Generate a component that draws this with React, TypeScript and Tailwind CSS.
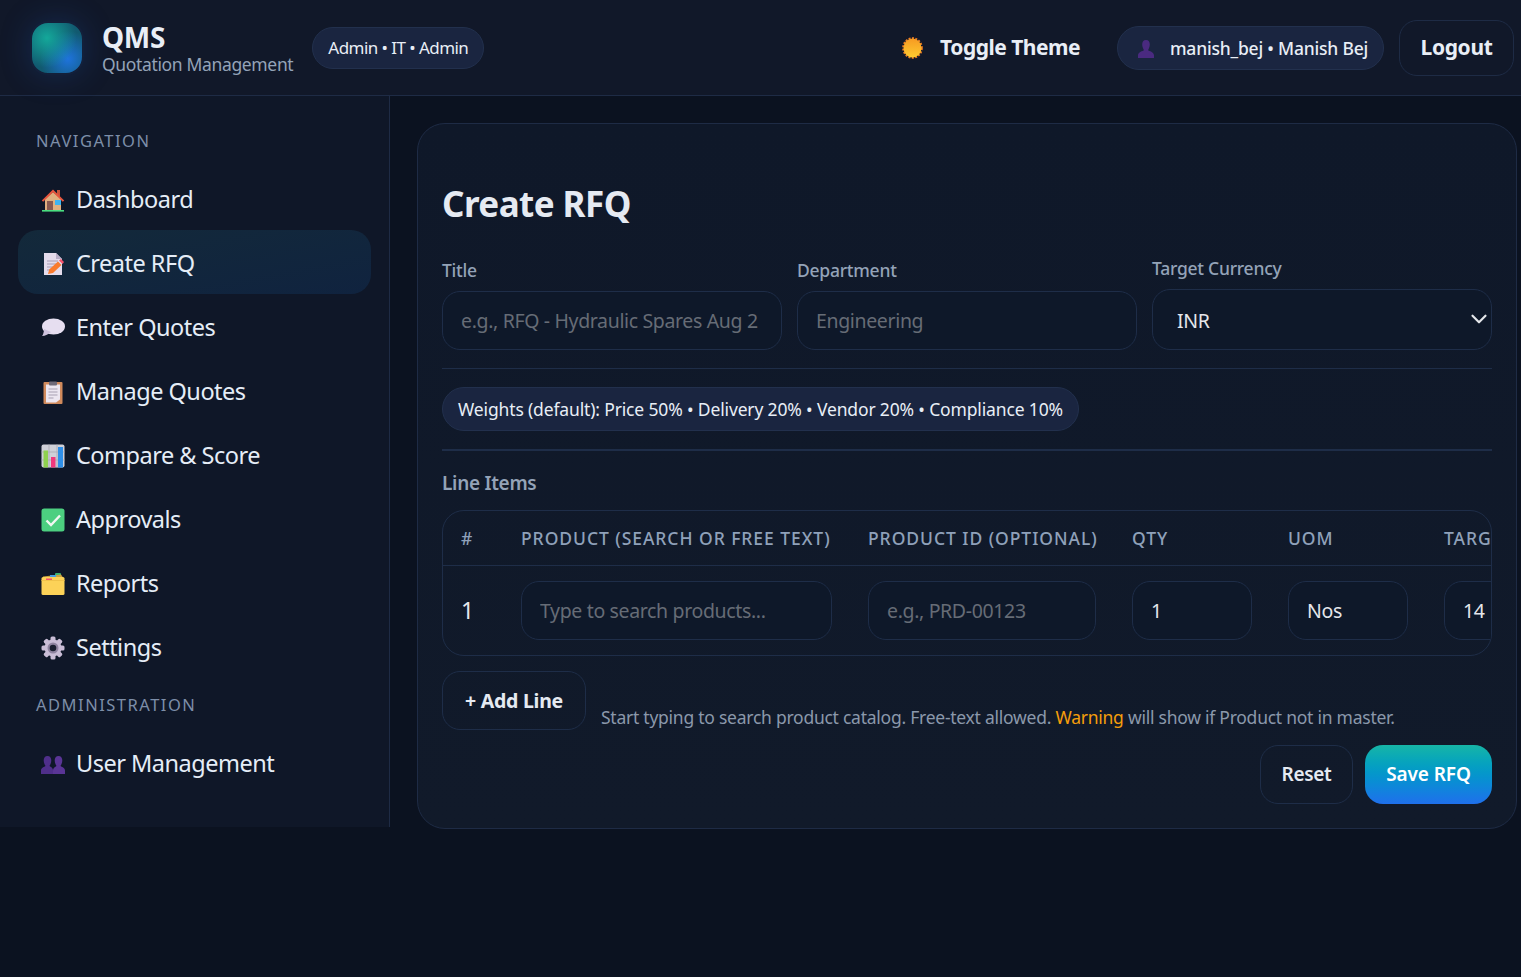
import React from 'react';
import { ChevronDown } from 'lucide-react';

const font = "font-['Noto_Sans','Open_Sans',sans-serif]";

const HouseIcon = () => (
  <svg width="24" height="24" viewBox="0 0 24 24">
    <rect x="16" y="2" width="3" height="6" fill="#c8553d" />
    <path d="M4 11 12 4l8 7v11H4z" fill="#e0b080" />
    <path d="M0.8 12.5 12 1.5l11.2 11-1.4 1.2L12 4.2 2.2 13.7z" fill="#e8553e" />
    <rect x="6" y="13" width="6" height="9" fill="#8a5a50" />
    <rect x="14" y="12" width="6" height="5" fill="#3fb4f2" />
    <rect x="1" y="22" width="22" height="1.6" fill="#4ade80" />
  </svg>
);

const MemoIcon = () => (
  <svg width="24" height="24" viewBox="0 0 24 24">
    <path d="M3 1h12l6 6v16H3z" fill="#e4dcec" />
    <path d="M15 1l6 6h-6z" fill="#b9aec8" />
    <path d="M6 9h11M6 12h11M6 15h7M6 18h5" stroke="#a59bb3" strokeWidth="1.1" />
    <path d="M7 22l1.2-4.5L17 9.5l3.5 3.4L12 21z" fill="#f97b2e" />
    <path d="M18 8.5l2-1.5 3 3-1.5 2z" fill="#f4516c" />
  </svg>
);

const BubbleIcon = () => (
  <svg width="24" height="24" viewBox="0 0 24 24">
    <ellipse cx="12.5" cy="10.5" rx="11.5" ry="8" fill="#e6def0" />
    <path d="M3 13c0 3-1 6-2 7 3 0 7-2 9-4z" fill="#cfc3de" />
  </svg>
);

const ClipboardIcon = () => (
  <svg width="24" height="24" viewBox="0 0 24 24">
    <rect x="2.5" y="2" width="19" height="22" rx="1" fill="#d08a5c" />
    <path d="M5 4.500h14v15l-4 3H5z" fill="#ece6f0" />
    <path d="M7.500 9h9M7.500 12h9M7.500 15h9M7.500 18h5" stroke="#a7a0b2" strokeWidth="1.1" />
    <rect x="8" y="1.500" width="8" height="4" rx="1" fill="#6f6a78" />
  </svg>
);

const ChartIcon = () => (
  <svg width="24" height="24" viewBox="0 0 24 24">
    <rect x="0.5" y="0.500" width="23" height="23" rx="2" fill="#cfd0d8" />
    <path d="M8 0.500v23M16 0.500v23M0.500 8h23M0.500 16h23" stroke="#a9aab4" strokeWidth="0.8" />
    <rect x="2.500" y="6.500" width="4.500" height="17" fill="#8fd14f" />
    <rect x="10" y="13" width="4.500" height="10.500" fill="#f0387c" />
    <rect x="17" y="3" width="5" height="20.500" fill="#2f8fe8" />
  </svg>
);

const CheckIcon = () => (
  <svg width="24" height="24" viewBox="0 0 24 24">
    <rect x="0.500" y="0.500" width="23" height="23" rx="2.500" fill="#4ccf80" />
    <path d="M5.500 12.500l4.500 4.500 9-9.500" fill="none" stroke="#f2f7f2" strokeWidth="2.400" />
  </svg>
);

const FolderIcon = () => (
  <svg width="24" height="24" viewBox="0 0 24 24">
    <rect x="14" y="1" width="6" height="4" rx="1" fill="#3bb273" />
    <path d="M2 4.500 20 2.500l2 3H2z" fill="#caa13f" />
    <rect x="9" y="3" width="6" height="2" fill="#4b9fe0" />
    <rect x="0.500" y="5" width="23" height="18" rx="1.500" fill="#fcd258" />
    <rect x="5" y="6.500" width="6" height="1.700" fill="#f4516c" />
    <rect x="0.500" y="8" width="23" height="1" fill="#f0c24a" />
  </svg>
);

const GearIcon = () => (
  <svg width="24" height="24" viewBox="0 0 24 24">
    <g fill="#c9bdd6">
      <circle cx="12" cy="12" r="8.500" />
      <rect x="9.500" y="0.500" width="5" height="23" rx="1.500" />
      <rect x="9.500" y="0.500" width="5" height="23" rx="1.500" transform="rotate(45 12 12)" />
      <rect x="9.500" y="0.500" width="5" height="23" rx="1.500" transform="rotate(90 12 12)" />
      <rect x="9.500" y="0.500" width="5" height="23" rx="1.500" transform="rotate(135 12 12)" />
    </g>
    <circle cx="12" cy="12" r="5.500" fill="#8f84a0" />
    <circle cx="12" cy="12" r="3.300" fill="#1a1f30" />
  </svg>
);

const BustsIcon = () => (
  <svg width="24" height="24" viewBox="0 0 24 24" fill="#4f2f8a">
    <path d="M6.500 4c2.500 0 3.800 2 3.800 4.500S9 13 8.500 14c1 1 3.500 1.500 3.500 4.500V22H0v-3.500C0 15.500 3.500 15 4.500 14 4 13 2.700 11 2.700 8.500S4 4 6.500 4z" />
    <path d="M17.500 4c2.500 0 3.800 2 3.800 4.500S20 13 19.500 14c1 1 4.500 1.500 4.500 4.500V22H12v-3.500c0-3 2.500-3.500 3.500-4.500-.5-1-1.800-3-1.800-5.500S15 4 17.500 4z" fill="#5a3596" />
  </svg>
);

const BustIcon = () => (
  <svg width="16" height="18" viewBox="0 0 16 18" fill="#4a2a80">
    <path d="M8 0c2.700 0 3.800 2 3.800 4.500S10.600 9 10 10.200c1 1 6 1.400 6 5.300V18H0v-2.500c0-3.900 5-4.300 6-5.300C5.400 9 4.200 7 4.200 4.500S5.300 0 8 0z" />
  </svg>
);

const SunIcon = () => (
  <svg width="21" height="22" viewBox="0 0 21 22">
    <defs>
      <linearGradient id="sun" x1="0" y1="0" x2="0" y2="1">
        <stop offset="0" stopColor="#f79a22" />
        <stop offset="1" stopColor="#fdcb30" />
      </linearGradient>
    </defs>
    <ellipse cx="10.500" cy="11" rx="9.300" ry="9.800" fill="none" stroke="#ef7d22" strokeWidth="2" strokeDasharray="2 1.400" />
    <ellipse cx="10.500" cy="11" rx="9" ry="9.500" fill="url(#sun)" />
  </svg>
);

const navItems = [
  { label: 'Dashboard', icon: <HouseIcon /> },
  { label: 'Create RFQ', icon: <MemoIcon />, active: true },
  { label: 'Enter Quotes', icon: <BubbleIcon /> },
  { label: 'Manage Quotes', icon: <ClipboardIcon /> },
  { label: 'Compare & Score', icon: <ChartIcon /> },
  { label: 'Approvals', icon: <CheckIcon /> },
  { label: 'Reports', icon: <FolderIcon /> },
  { label: 'Settings', icon: <GearIcon /> },
];

const NavLink = ({ label, icon, active }: { label: string; icon: React.ReactNode; active?: boolean }) => (
  <a
    className={`flex h-[64px] items-center gap-[11px] rounded-[20px] pl-[23px] pt-[4px] text-[23.5px] tracking-[-0.5px] text-[#e5edf7] ${
      active ? 'bg-gradient-to-br from-[#13293a] to-[#10233f]' : ''
    }`}
  >
    <span className="flex h-6 w-6 shrink-0 items-center justify-center">{icon}</span>
    {label}
  </a>
);

const inputClass =
  'h-[59px] w-full rounded-[18px] border border-[#1e2d48] bg-[#0e1829] px-[18px] text-[19.5px] tracking-[-0.35px] text-[#e5e7eb] outline-none placeholder:text-[#666c76]';

const Header = () => (
  <header className="relative flex h-[96px] items-center border-b border-[#1e2b45] bg-[#111829] pl-[30px] pr-[7px]">
    <div className="h-[54px] w-[54px] rounded-[18px] border-2 border-[#13203a] bg-[#115a70] bg-[radial-gradient(circle_at_30%_30%,#14a89a_0%,transparent_60%),radial-gradient(circle_at_72%_72%,#1e73dc_0%,transparent_55%)] shadow-[0_0_30px_rgba(30,90,190,0.25)]" />
    <div className="ml-[18px] flex flex-col pt-[3px]">
      <span className="text-[28px] font-bold leading-[30px] tracking-[-0.3px] text-[#e9eef6]">QMS</span>
      <span className="text-[17.5px] leading-[24px] tracking-[-0.35px] text-[#94a3b8]">Quotation Management</span>
    </div>
    <div className="ml-[19px] flex h-[42px] w-[172px] items-center justify-center rounded-full border border-[#22304d] bg-[#1a2540] pt-[1px] text-[17px] tracking-[-0.55px] text-[#e8eef6]">
      Admin • IT • Admin
    </div>
    <div className="ml-auto flex items-center">
      <SunIcon />
      <span className="ml-[17px] text-[21px] font-bold tracking-[-0.5px] text-[#e9eef6]">Toggle Theme</span>
      <div className="ml-[37px] flex h-[44px] w-[267px] items-center gap-[16px] rounded-full border border-[#22304d] bg-[#1a2540] pl-[20px] pt-[2px] text-[17.5px] font-medium tracking-[-0.2px] text-[#e8eef6]">
        <BustIcon />
        manish_bej • Manish Bej
      </div>
      <button className="ml-[15px] h-[56px] w-[115px] rounded-[18px] border border-[#1e2b45] text-[21px] font-bold tracking-[-0.35px] text-[#e9eef6]">
        Logout
      </button>
    </div>
  </header>
);

const Sidebar = () => (
  <aside className="h-[731px] w-[390px] shrink-0 border-r border-[#1e2b45] bg-[#0f1728] px-[18px]">
    <div className="flex h-[70px] items-center pl-[18px] pt-[20px] text-[16.5px] tracking-[1.5px] text-[#7d8ea8] uppercase">
      Navigation
    </div>
    <nav className="flex flex-col">
      {navItems.map(item => (
        <NavLink key={item.label} {...item} />
      ))}
    </nav>
    <div className="mt-[2px] flex h-[50px] items-center pl-[18px] text-[16.5px] tracking-[1.5px] text-[#7d8ea8] uppercase">
      Administration
    </div>
    <NavLink label="User Management" icon={<BustsIcon />} />
  </aside>
);

const Field = ({ label, placeholder }: { label: string; placeholder: string }) => (
  <label className="flex flex-col gap-[9px]">
    <span className="text-[17.5px] font-medium leading-[24px] tracking-[-0.25px] text-[#94a3b8]">{label}</span>
    <input className={inputClass} placeholder={placeholder} />
  </label>
);

const headCell = 'flex h-[54px] items-center px-[18px] text-[17.5px] font-medium tracking-[0.95px] text-[#8fa1ba] uppercase whitespace-nowrap';

const LineItems = () => (
  <div className="mt-[14px] overflow-hidden rounded-[22px] border border-[#1e2d48]">
    <div className="grid w-[1200px] grid-cols-[60px_347px_264px_156px_156px_217px] border-b border-[#1e2d48]">
      <div className={headCell}>#</div>
      <div className={headCell}>Product (Search or free text)</div>
      <div className={headCell}>Product ID (optional)</div>
      <div className={headCell}>Qty</div>
      <div className={headCell}>UOM</div>
      <div className={headCell}>Target Price</div>
    </div>
    <div className="grid w-[1200px] grid-cols-[60px_347px_264px_156px_156px_217px] items-center py-[15px]">
      <div className="px-[18px] text-[23px] text-[#e5e7eb]">1</div>
      <div className="px-[18px]">
        <input className={inputClass} placeholder="Type to search products..." />
      </div>
      <div className="px-[18px]">
        <input className={inputClass} placeholder="e.g., PRD-00123" />
      </div>
      <div className="px-[18px]">
        <input className={inputClass} defaultValue="1" />
      </div>
      <div className="px-[18px]">
        <input className={inputClass} defaultValue="Nos" />
      </div>
      <div className="px-[18px]">
        <input className={inputClass} defaultValue="14" />
      </div>
    </div>
  </div>
);

const App: React.FC = () => {
  return (
    <div className={`min-h-[977px] overflow-hidden bg-[#0b1220] ${font}`}>
      <Header />
      <div className="flex items-start">
        <Sidebar />
        <main className="pl-[27px] pt-[27px]">
          <section className="h-[706px] w-[1100px] rounded-[28px] border border-[#1e2b45] bg-gradient-to-b from-[#0f1829] to-[#111a2a] px-[24px]">
            <h1 className="mt-[53px] text-[35px] font-bold leading-[54px] tracking-[-0.55px] text-[#e5eaf2]">Create RFQ</h1>
            <div className="mt-[25px] grid grid-cols-3 items-end gap-[15px]">
              <Field label="Title" placeholder="e.g., RFQ - Hydraulic Spares Aug 2" />
              <Field label="Department" placeholder="Engineering" />
              <label className="flex flex-col gap-[9px]">
                <span className="text-[17.5px] font-medium leading-[24px] tracking-[-0.25px] text-[#94a3b8]">Target Currency</span>
                <span className="relative block">
                  <select className="h-[61px] w-full appearance-none rounded-[18px] border border-[#1e2d48] bg-[#0e1829] px-[24px] pt-[2px] text-[19.5px] tracking-[-0.3px] text-[#e5e7eb] outline-none">
                    <option>INR</option>
                  </select>
                  <ChevronDown className="absolute right-0 top-[17px] h-[26px] w-[26px] text-[#e5e7eb]" strokeWidth={2} />
                </span>
              </label>
            </div>
            <hr className="mt-[18px] border-[#1e2d48]" />
            <div className="mt-[18px] inline-flex h-[44px] w-[637px] items-center justify-center rounded-full border border-[#22304d] bg-[#1a2540] text-[17.5px] tracking-[-0.15px] text-[#e8eef6]">
              Weights (default): Price 50% • Delivery 20% • Vendor 20% • Compliance 10%
            </div>
            <hr className="mt-[18px] border-t-2 border-[#1e2d48]" />
            <h2 className="mt-[19px] text-[19px] font-semibold leading-[26px] tracking-[-0.3px] text-[#94a3b8]">Line Items</h2>
            <LineItems />
            <div className="mt-[15px] flex items-end gap-[15px]">
              <button className="h-[59px] w-[144px] rounded-[18px] border border-[#1e2d48] text-[19.5px] font-bold tracking-[-0.25px] text-[#e5eaf2]">
                + Add Line
              </button>
              <p className="text-[17.5px] tracking-[-0.25px] text-[#8b98ab]">
                Start typing to search product catalog. Free-text allowed. <span className="text-[#f59e0b]">Warning</span> will show if Product not in master.
              </p>
            </div>
            <div className="mt-[15px] flex justify-end gap-[12px]">
              <button className="h-[59px] w-[93px] rounded-[18px] border border-[#1e2d48] text-[19px] font-semibold tracking-[-0.3px] text-[#e5eaf2]">
                Reset
              </button>
              <button className="h-[59px] w-[127px] rounded-[18px] bg-gradient-to-b from-[#17b5a6] to-[#1f6fec] text-[19px] font-semibold tracking-[-0.1px] text-white">
                Save RFQ
              </button>
            </div>
          </section>
        </main>
      </div>
    </div>
  );
};

export default App;
